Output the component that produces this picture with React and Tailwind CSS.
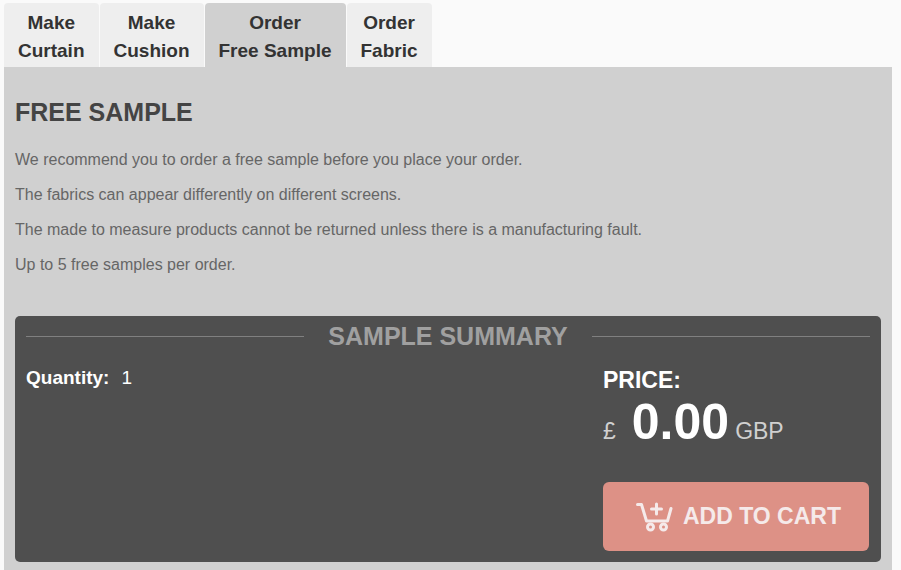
import clsx from 'clsx';

const TABS = [
  { id: 'curtain', top: 'Make', bottom: 'Curtain' },
  { id: 'cushion', top: 'Make', bottom: 'Cushion' },
  { id: 'sample', top: 'Order', bottom: 'Free Sample' },
  { id: 'fabric', top: 'Order', bottom: 'Fabric' },
];

const NOTES = [
  'We recommend you to order a free sample before you place your order.',
  'The fabrics can appear differently on different screens.',
  'The made to measure products cannot be returned unless there is a manufacturing fault.',
  'Up to 5 free samples per order.',
];

const CartPlusIcon = () => (
  <svg width="38" height="30" viewBox="0 0 38 30" fill="none" stroke="currentColor" strokeWidth="3" strokeLinecap="round" strokeLinejoin="round" aria-hidden="true">
    <path d="M2.500 2.500H6.500L11.500 19H32.500L36 6.500" />
    <path d="M21.500 2v10M16.500 7h10" />
    <circle cx="15.500" cy="25" r="3" />
    <circle cx="28.500" cy="25" r="3" />
  </svg>
);

const ProductTabs = ({ active }) => (
  <div role="tablist" className="flex gap-px">
    {TABS.map((tab) => (
      <button
        key={tab.id}
        id={`tab-${tab.id}`}
        type="button"
        role="tab"
        aria-selected={tab.id === active}
        className={clsx(
          'rounded-t px-[14px] pt-1.5 pb-0.5 text-[19px] leading-7 font-bold text-[#333]',
          tab.id === active ? 'bg-[#d0d0d0]' : 'bg-[#eee]'
        )}
      >
        <span className="block">{tab.top}</span>
        <span className="block">{tab.bottom}</span>
      </button>
    ))}
  </div>
);

const SampleSummary = () => (
  <section className="rounded-[5px] bg-[#4f4f4f] px-[11px] pt-[5px] pb-[11px] text-white">
    <div className="flex items-center gap-6">
      <span className="h-px flex-1 bg-[#808080]" />
      <h2 className="text-[25px] leading-[30px] font-bold text-[#a0a0a0]">SAMPLE SUMMARY</h2>
      <span className="h-px flex-1 bg-[#808080]" />
    </div>

    <div className="mt-[13px] flex justify-between pr-px">
      <p className="text-[19px] leading-7">
        <b className="mr-3">Quantity:</b>1
      </p>
      <div className="w-[266px]">
        <h3 className="pt-px text-[23px] leading-[30px] font-bold">PRICE:</h3>
        <p className="flex items-baseline text-[23px] leading-[54px] text-[#d0d0d0]">
          £<strong className="ml-4 mr-1.5 text-[50px] text-white">0.00</strong>GBP
        </p>
        <button
          type="button"
          className="mt-6 flex h-[69px] w-full items-center justify-center gap-2.5 rounded-md bg-[#dd9186] pl-1 text-[23px] font-bold text-[#f5eaea]"
        >
          <CartPlusIcon />
          ADD TO CART
        </button>
      </div>
    </div>
  </section>
);

const App = () => (
  <main className="flex min-h-screen flex-col bg-[#fafafa] pt-[3px] pr-[9px] pl-1 font-['Liberation_Sans',Arial,sans-serif]">
    <ProductTabs active="sample" />
    <div role="tabpanel" aria-labelledby="tab-sample" className="flex-1 bg-[#d0d0d0] px-[11px] pt-[30px] pb-2">
      <h1 className="text-[25px] leading-[30px] font-bold text-[#444]">FREE SAMPLE</h1>
      <div className="mt-[21px] mb-[39px] space-y-[11px] text-[16px] leading-6 text-[#666]">
        {NOTES.map((note) => (
          <p key={note}>{note}</p>
        ))}
      </div>
      <SampleSummary />
    </div>
  </main>
);

export default App;
